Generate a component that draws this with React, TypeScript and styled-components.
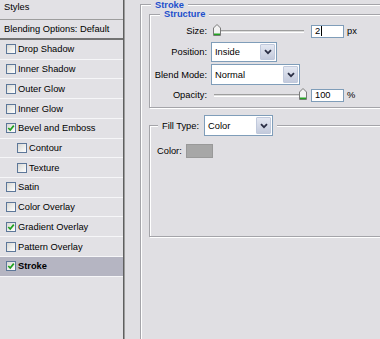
import styled, { createGlobalStyle } from "styled-components";

const colors = {
  face: "#e0dfe3",
  panel: "#e2e1e5",
  selected: "#b5b5c2",
  legend: "#1d4fcc",
  field: "#7f9db9",
  etch: "#a4a4a9",
};

const GlobalStyle = createGlobalStyle`
  html, body {
    margin: 0;
    padding: 0;
    background: ${colors.face};
  }
  body {
    font-family: "Liberation Sans", Arial, sans-serif;
    font-size: 9.3px;
    color: #000;
  }
  * {
    box-sizing: border-box;
  }
`;

const Window = styled.div`
  display: flex;
  width: 380px;
  height: 339px;
  overflow: hidden;
  background: ${colors.face};
`;

const StylesPanel = styled.div`
  width: 124px;
  flex-shrink: 0;
  display: flex;
  flex-direction: column;
  background: ${colors.panel};
  border-right: 1px solid #5f5f5f;
  box-shadow: 1px 0 0 #9c9c9c;
`;

const PanelHeader = styled.div`
  height: 20px;
  padding: 2px 0 0 4px;
  line-height: 11px;
  border-bottom: 1px solid #9d9d9d;
`;

const BlendingRow = styled.div`
  height: 20px;
  display: flex;
  align-items: center;
  padding-left: 4px;
  border-bottom: 2px solid #727272;
`;

const EffectRow = styled.div<{ $indent?: boolean; $selected?: boolean }>`
  height: 19.73px;
  display: flex;
  align-items: center;
  gap: 2px;
  padding-left: ${p => (p.$indent ? 17 : 6)}px;
  border-bottom: 1px solid #f6f6f8;
  background: ${p => (p.$selected ? colors.selected : "transparent")};
  font-weight: ${p => (p.$selected ? "bold" : "normal")};
`;

const CheckBox = styled.span`
  width: 10px;
  height: 10px;
  flex-shrink: 0;
  display: flex;
  align-items: center;
  justify-content: center;
  border: 1px solid #5d7799;
  background: linear-gradient(135deg, #d8d8d4, #ffffff);
`;

const Content = styled.div`
  width: 280px;
  flex-shrink: 0;
  padding-left: 16px;
`;

const GroupBox = styled.fieldset`
  margin: 0;
  padding: 0;
  min-width: 0;
  border: 1px solid ${colors.etch};
  box-shadow: 1px 1px 0 #fff, inset 1px 1px 0 #fff;
`;

const StrokeBox = styled(GroupBox)`
  min-height: 360px;
`;

const StructureBox = styled(GroupBox)`
  margin: 0 0 0 8px;
  padding: 4px 0 5px 0;
`;

const FillBox = styled(GroupBox)`
  margin: 7px 0 0 8px;
  padding: 0 0 78px 0;
`;

const Legend = styled.legend<{ $tight?: boolean }>`
  margin-left: 10px;
  padding: ${p => (p.$tight ? "2px 4px 0" : "0 4px")};
  line-height: ${p => (p.$tight ? 7 : 11)}px;
  font-weight: bold;
  color: ${colors.legend};
  background: ${colors.face};
`;

const FillLegend = styled.legend`
  margin-left: 8px;
  padding: 0 4px;
  display: flex;
  align-items: center;
  gap: 5px;
  background: ${colors.face};
`;

const ControlRow = styled.div<{ $h: number; $mt?: number }>`
  height: ${p => p.$h}px;
  margin-top: ${p => p.$mt ?? 0}px;
  display: flex;
  align-items: center;
`;

const Label = styled.span`
  width: 57px;
  flex-shrink: 0;
  margin-right: 4px;
  text-align: right;
  white-space: nowrap;
`;

const SliderWrap = styled.div`
  position: relative;
  width: 94px;
  height: 100%;
  display: flex;
  align-items: center;
`;

const Track = styled.div`
  flex: 1;
  height: 3px;
  margin: 0 1px 0 3px;
  background: #dcdcdc;
  border-top: 1px solid #9e9e9e;
  border-bottom: 1px solid #fff;
`;

const Thumb = styled.svg`
  position: absolute;
  top: 0;
`;

const NumberField = styled.div`
  width: 33px;
  height: 13px;
  margin-left: 6px;
  padding-left: 3px;
  display: flex;
  align-items: center;
  background: #fff;
  border: 1px solid ${colors.field};
  line-height: 11px;
`;

const Caret = styled.span`
  width: 1px;
  height: 10px;
  margin-left: 1px;
  background: #000;
`;

const Unit = styled.span`
  margin-left: 3px;
`;

const SelectBox = styled.div<{ $w: number; $h: number }>`
  width: ${p => p.$w}px;
  height: ${p => p.$h}px;
  display: flex;
  align-items: stretch;
  padding: 1px;
  background: #fff;
  border: 1px solid ${colors.field};
`;

const SelectText = styled.span`
  flex: 1;
  display: flex;
  align-items: center;
  padding-left: 2px;
`;

const SelectButton = styled.span`
  width: 15px;
  display: flex;
  align-items: center;
  justify-content: center;
  border: 1px solid #c0c9dc;
  border-radius: 1px;
  background: linear-gradient(#e4e8f2, #c3cadc);
`;

const ColorRow = styled.div`
  height: 14px;
  margin-top: 8px;
  padding-left: 7px;
  display: flex;
  align-items: center;
`;

const Swatch = styled.span`
  width: 27px;
  height: 14px;
  margin-left: 4px;
  background: #a7a7a7;
  border: 1px solid #999;
`;

const effects = [
  { name: "Drop Shadow", checked: false },
  { name: "Inner Shadow", checked: false },
  { name: "Outer Glow", checked: false },
  { name: "Inner Glow", checked: false },
  { name: "Bevel and Emboss", checked: true },
  { name: "Contour", checked: false, indent: true },
  { name: "Texture", checked: false, indent: true },
  { name: "Satin", checked: false },
  { name: "Color Overlay", checked: false },
  { name: "Gradient Overlay", checked: true },
  { name: "Pattern Overlay", checked: false },
  { name: "Stroke", checked: true, selected: true },
];

function Check({ checked }: { checked: boolean }) {
  return (
    <CheckBox>
      {checked && (
        <svg width="8" height="8" viewBox="0 0 8 8">
          <path d="M1.3 4 L3.2 6 L6.8 1.6" fill="none" stroke="#1fa01f" strokeWidth="1.7" />
        </svg>
      )}
    </CheckBox>
  );
}

function Slider({ value, max }: { value: number; max: number }) {
  const left = 2 + (value / max) * 86;
  return (
    <SliderWrap>
      <Track />
      <Thumb width="8" height="12" viewBox="0 0 8 12" style={{ left }}>
        <path d="M4 0.5 L7.5 4 V11.5 H0.5 V4 Z" fill="#f3f3f3" stroke="#7a7a7a" />
        <path d="M1 10.3 H7" stroke="#22a322" strokeWidth="1.6" />
      </Thumb>
    </SliderWrap>
  );
}

function Select({ value, w, h }: { value: string; w: number; h: number }) {
  return (
    <SelectBox $w={w} $h={h}>
      <SelectText>{value}</SelectText>
      <SelectButton>
        <svg width="8" height="6" viewBox="0 0 8 6">
          <path d="M1 1.2 L4 4.2 L7 1.2" fill="none" stroke="#2b2f45" strokeWidth="1.8" />
        </svg>
      </SelectButton>
    </SelectBox>
  );
}

export default function App() {
  return (
    <>
      <GlobalStyle />
      <Window>
        <StylesPanel>
          <PanelHeader>Styles</PanelHeader>
          <BlendingRow>Blending Options: Default</BlendingRow>
          {effects.map(e => (
            <EffectRow key={e.name} $indent={e.indent} $selected={e.selected}>
              <Check checked={e.checked} />
              {e.name}
            </EffectRow>
          ))}
        </StylesPanel>
        <Content>
          <StrokeBox>
            <Legend $tight>Stroke</Legend>
            <StructureBox>
              <Legend>Structure</Legend>
              <ControlRow $h={14}>
                <Label>Size:</Label>
                <Slider value={1} max={250} />
                <NumberField>
                  2<Caret />
                </NumberField>
                <Unit>px</Unit>
              </ControlRow>
              <ControlRow $h={20} $mt={4}>
                <Label>Position:</Label>
                <Select value="Inside" w={66} h={20} />
              </ControlRow>
              <ControlRow $h={21} $mt={2}>
                <Label>Blend Mode:</Label>
                <Select value="Normal" w={89} h={21} />
              </ControlRow>
              <ControlRow $h={14} $mt={3}>
                <Label>Opacity:</Label>
                <Slider value={100} max={100} />
                <NumberField>100</NumberField>
                <Unit>%</Unit>
              </ControlRow>
            </StructureBox>
            <FillBox>
              <FillLegend>
                Fill Type:
                <Select value="Color" w={69} h={21} />
              </FillLegend>
              <ColorRow>
                Color:
                <Swatch />
              </ColorRow>
            </FillBox>
          </StrokeBox>
        </Content>
      </Window>
    </>
  );
}
